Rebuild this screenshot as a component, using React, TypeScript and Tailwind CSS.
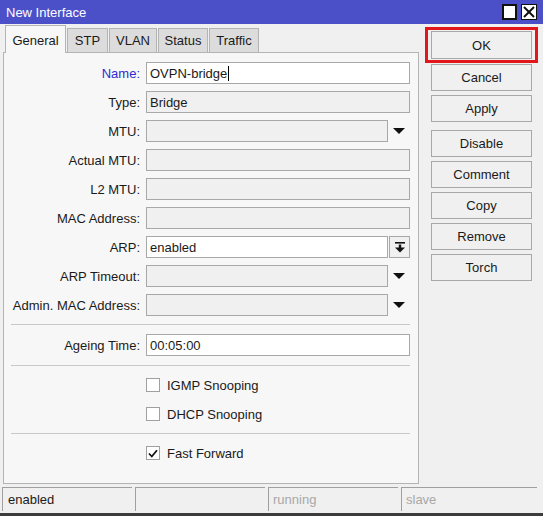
import React from "react";

const FONT = { fontFamily: '"Liberation Sans", Arial, sans-serif' };

function Arrow() {
  return (
    <svg width="12" height="6" viewBox="0 0 12 6">
      <polygon points="0,0 12,0 6,6" fill="#111" />
    </svg>
  );
}

function Label({ text, blue }: { text: string; blue?: boolean }) {
  return (
    <div className={`w-[136px] shrink-0 text-right whitespace-nowrap ${blue ? "text-[#2c2cd0]" : "text-[#1a1a1a]"}`}>
      {text}
    </div>
  );
}

function Field({
  label,
  value,
  editable,
  blue,
  kind,
  cursor,
}: {
  label: string;
  value?: string;
  editable?: boolean;
  blue?: boolean;
  kind?: "full" | "drop" | "arp";
  cursor?: boolean;
}) {
  const k = kind ?? "full";
  return (
    <div className="flex items-center h-[22px]">
      <Label text={label} blue={blue} />
      <div
        className={`ml-[6px] h-[22px] border border-[#a8a8a8] flex items-center px-[3px] text-[#1a1a1a] ${
          editable ? "bg-white" : "bg-[#f0f0f0]"
        } ${k === "full" ? "w-[264px]" : "w-[242px]"}`}
      >
        {value}
        {cursor && <span className="inline-block w-px h-[15px] bg-black ml-[1px]" />}
      </div>
      {k === "drop" && (
        <div className="w-[22px] h-[22px] flex items-center justify-center">
          <Arrow />
        </div>
      )}
      {k === "arp" && (
        <div className="ml-[1px] w-[21px] h-[22px] border border-[#a8a8a8] bg-[#f0f0f0] flex items-center justify-center">
          <svg width="10" height="11" viewBox="0 0 10 11">
            <rect x="0" y="0" width="10" height="1.6" fill="#111" />
            <rect x="3.8" y="2.5" width="2.4" height="4" fill="#111" />
            <polygon points="0,5.5 10,5.5 5,10.5" fill="#111" />
          </svg>
        </div>
      )}
    </div>
  );
}

function Sep() {
  return <div className="h-px bg-[#c8c8c8] ml-[7px] mr-[8px]" />;
}

function Check({ label, checked }: { label: string; checked?: boolean }) {
  return (
    <div className="flex items-center h-[22px]">
      <div className="w-[142px] shrink-0" />
      <div className="w-[14px] h-[14px] border border-[#a0a0a0] bg-white flex items-center justify-center">
        {checked && (
          <svg width="10" height="9" viewBox="0 0 10 9">
            <polyline points="1,4.5 3.8,7.5 9,1.2" fill="none" stroke="#111" strokeWidth="1.8" />
          </svg>
        )}
      </div>
      <div className="ml-[7px] text-[#1a1a1a]">{label}</div>
    </div>
  );
}

function Btn({ text, h = "h-[27px]" }: { text: string; h?: string }) {
  return (
    <div className={`w-[101px] ${h} border border-[#a8a8a8] bg-[#f0f0f0] flex items-center justify-center text-[#1a1a1a]`}>
      {text}
    </div>
  );
}

export default function App() {
  const tabs = [
    { t: "STP", w: "w-[41px]" },
    { t: "VLAN", w: "w-[48px]" },
    { t: "Status", w: "w-[50px]" },
    { t: "Traffic", w: "w-[50px]" },
  ];
  return (
    <div
      className="w-[543px] h-[516px] bg-[#f0f0f0] flex flex-col text-[13px] leading-none border-b-[3px] border-[#3c3c3c] overflow-hidden"
      style={FONT}
    >
      {/* Title bar */}
      <div className="h-[24px] shrink-0 bg-[#4b50c9] flex items-center text-white text-[13px]">
        <div className="pl-[6px] flex-1">New Interface</div>
        <div className="flex items-center gap-[4px] pr-[6px]">
          <div className="w-[15px] h-[16px] bg-white border-[2px] border-[#111]" />
          <div className="w-[16px] h-[16px] bg-white border border-[#111] flex items-center justify-center">
            <svg width="12" height="12" viewBox="0 0 12 12">
              <line x1="1" y1="1" x2="11" y2="11" stroke="#111" strokeWidth="2" />
              <line x1="11" y1="1" x2="1" y2="11" stroke="#111" strokeWidth="2" />
            </svg>
          </div>
        </div>
      </div>

      <div className="flex flex-1">
        {/* Left column */}
        <div className="ml-[3px] w-[416px] flex flex-col">
          <div className="h-[29px] flex items-end pl-[2px] gap-px relative z-10">
            <div className="w-[61px] h-[28px] bg-[#f7f7f7] border border-b-0 border-[#b4b4b4] flex items-center justify-center pt-[1px] text-[#1a1a1a]">
              General
            </div>
            {tabs.map((t) => (
              <div
                key={t.t}
                className={`${t.w} h-[24px] mb-px bg-[#dcdcdc] border border-b-0 border-[#b4b4b4] flex items-center justify-center text-[#1a1a1a]`}
              >
                {t.t}
              </div>
            ))}
          </div>
          <div className="h-[432px] -mt-px border border-[#b4b4b4] bg-[#f7f7f7] flex flex-col pt-[9px]">
            <div className="flex flex-col gap-[7px]">
              <Field label="Name:" value="OVPN-bridge" editable blue cursor />
              <Field label="Type:" value="Bridge" />
              <Field label="MTU:" kind="drop" />
              <Field label="Actual MTU:" />
              <Field label="L2 MTU:" />
              <Field label="MAC Address:" />
              <Field label="ARP:" value="enabled" editable kind="arp" />
              <Field label="ARP Timeout:" kind="drop" />
              <Field label="Admin. MAC Address:" kind="drop" />
            </div>
            <div className="mt-[8px]">
              <Sep />
            </div>
            <div className="mt-[9px]">
              <Field label="Ageing Time:" value="00:05:00" editable />
            </div>
            <div className="mt-[9px]">
              <Sep />
            </div>
            <div className="mt-[8px] flex flex-col gap-[7px]">
              <Check label="IGMP Snooping" />
              <Check label="DHCP Snooping" />
            </div>
            <div className="mt-[8px]">
              <Sep />
            </div>
            <div className="mt-[8px]">
              <Check label="Fast Forward" checked />
            </div>
          </div>
        </div>

        {/* Right column */}
        <div className="ml-[6px] flex flex-col pt-[3px]">
          <div className="w-[113px] border-[3px] border-[#e3161c] py-px px-[3px]">
            <Btn text="OK" h="h-[28px]" />
          </div>
          <div className="pl-[6px] pt-px flex flex-col">
            <Btn text="Cancel" />
            <div className="mt-[4px]">
              <Btn text="Apply" />
            </div>
            <div className="mt-[8px] flex flex-col gap-[4px]">
              <Btn text="Disable" />
              <Btn text="Comment" />
              <Btn text="Copy" />
              <Btn text="Remove" />
              <Btn text="Torch" />
            </div>
          </div>
        </div>
      </div>

      {/* Status bar */}
      <div className="h-[24px] mb-[2px] shrink-0 flex gap-[3px] pl-[2px]">
        <div className="w-[130px] border-t border-l border-[#a0a0a0] flex items-center pl-[5px] text-[#1a1a1a]">enabled</div>
        <div className="w-[130px] border-t border-l border-[#a0a0a0]" />
        <div className="w-[130px] border-t border-l border-[#a0a0a0] flex items-center pl-[4px] text-[#a8a8a8]">running</div>
        <div className="w-[136px] border-t border-l border-[#a0a0a0] flex items-center pl-[4px] text-[#a8a8a8]">slave</div>
      </div>
    </div>
  );
}
